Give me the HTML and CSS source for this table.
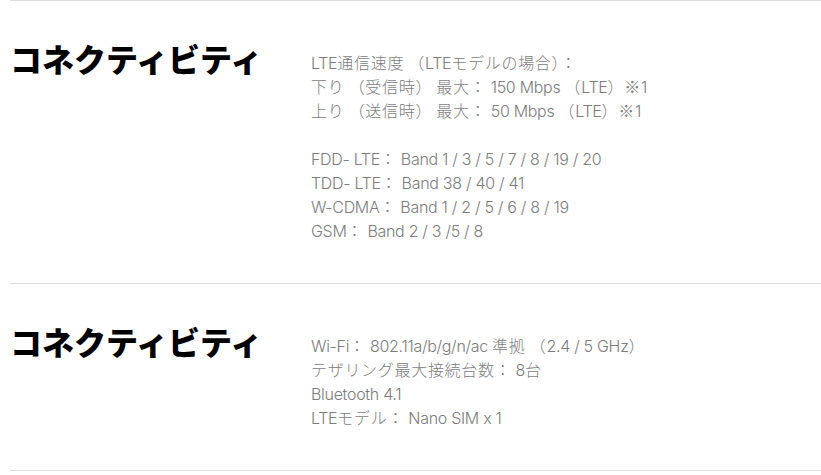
FILE: index.html
```html
<!DOCTYPE html>
<html lang="ja">
<head>
<meta charset="utf-8">
<link rel="stylesheet" href="styles.css">
</head>
<body>
<div class="specs">
  <section class="spec">
    <h2 class="spec-title">コネクティビティ</h2>
    <div class="spec-body">
      <div class="group">
        <div class="line">LTE<span class="ja">通信速度 （</span>LTE<span class="ja">モデルの場合）：</span></div>
        <div class="line"><span class="ja">下り （受信時） 最大：</span> 150 Mbps <span class="ja">（</span>LTE<span class="ja">）※</span>1</div>
        <div class="line"><span class="ja">上り （送信時） 最大：</span> 50 Mbps <span class="ja">（</span>LTE<span class="ja">）※</span>1</div>
      </div>
      <div class="group">
        <div class="line">FDD- LTE<span class="ja">：</span> Band 1 / 3 / 5 / 7 / 8 / 19 / 20</div>
        <div class="line">TDD- LTE<span class="ja">：</span> Band 38 / 40 / 41</div>
        <div class="line">W-CDMA<span class="ja">：</span> Band 1 / 2 / 5 / 6 / 8 / 19</div>
        <div class="line">GSM<span class="ja">：</span> Band 2 / 3 /5 / 8</div>
      </div>
    </div>
  </section>
  <section class="spec">
    <h2 class="spec-title">コネクティビティ</h2>
    <div class="spec-body">
      <div class="group">
        <div class="line">Wi-Fi<span class="ja">：</span> 802.11a/b/g/n/ac <span class="ja">準拠 （</span>2.4 / 5 GHz<span class="ja">）</span></div>
        <div class="line"><span class="ja">テザリング最大接続台数：</span> 8<span class="ja">台</span></div>
        <div class="line">Bluetooth 4.1</div>
        <div class="line">LTE<span class="ja">モデル：</span> Nano SIM x 1</div>
      </div>
    </div>
  </section>
  <div class="end"></div>
</div>
</body>
</html>
```
FILE: styles.css
```css
html, body {
  margin: 0;
  padding: 0;
  background: #fff;
}
.specs {
  padding-left: 10px;
}
.spec {
  display: grid;
  grid-template-columns: 301px 1fr;
  border-top: 1px solid #dcdcdc;
  padding: 50px 0 40px;
}
.spec-title {
  margin: -5px 0 0;
  font-family: "Noto Sans CJK JP", sans-serif;
  font-weight: 900;
  font-size: 32px;
  line-height: 24px;
  color: #000;
}
.spec-body {
  display: flex;
  flex-direction: column;
  gap: 24px;
  font-family: Inter, "Noto Sans CJK JP", sans-serif;
  font-weight: 300;
  font-size: 16px;
  color: #7c7c7c;
  letter-spacing: -0.3px;
}
.line {
  height: 24px;
  line-height: 24px;
  white-space: nowrap;
}
.ja {
  font-family: "Noto Sans CJK JP", sans-serif;
  font-weight: 300;
  letter-spacing: 0.7px;
  line-height: 1;
}
.end {
  border-top: 1px solid #dcdcdc;
  height: 10px;
}
```
